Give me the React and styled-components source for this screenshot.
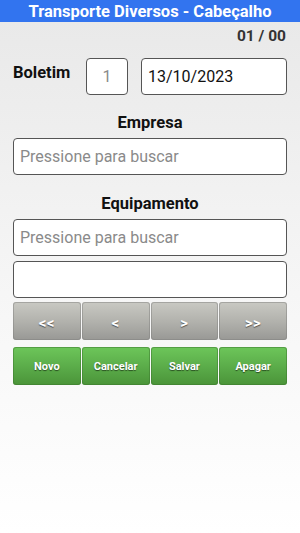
import React from "react";
import styled, { createGlobalStyle } from "styled-components";

const Global = createGlobalStyle`
  html, body { margin: 0; padding: 0; }
  body {
    font-family: Roboto, "Liberation Sans", Arial, sans-serif;
    background: #fff;
  }
`;

const Page = styled.div`
  width: 300px;
  min-height: 533px;
  box-sizing: border-box;
  background: linear-gradient(to bottom, #e8e8e8 0%, #f6f6f6 55%, #ffffff 100%);
  display: flex;
  flex-direction: column;
`;

const Header = styled.div`
  height: 22px;
  background: #3274ef;
  color: #fff;
  font-weight: bold;
  font-size: 16.5px;
  display: flex;
  align-items: center;
  justify-content: center;
`;

const Counter = styled.div`
  text-align: right;
  padding: 4px 14px 0 0;
  font-size: 15.5px;
  font-weight: bold;
  color: #333;
  height: 20px;
  line-height: 20px;
`;

const Content = styled.div`
  padding: 0 13px;
  display: flex;
  flex-direction: column;
`;

const BoletimRow = styled.div`
  display: flex;
  align-items: center;
  margin-top: 12px;
  height: 37px;
`;

const Label = styled.div`
  font-size: 16.5px;
  font-weight: bold;
  color: #111;
  width: 73px;
  margin-top: -8px;
`;

const Field = styled.div`
  box-sizing: border-box;
  height: 37px;
  width: ${(p) => (p.$w ? p.$w + "px" : "auto")};
  flex: ${(p) => (p.$grow ? 1 : "none")};
  margin-left: ${(p) => p.$ml || 0}px;
  margin-top: ${(p) => p.$mt || 0}px;
  background: #fff;
  border: 1px solid #555;
  border-radius: 4px;
  display: flex;
  align-items: center;
  justify-content: ${(p) => (p.$center ? "center" : "flex-start")};
  padding: ${(p) => (p.$center ? "0" : "0 6px")};
  font-size: 16px;
  color: ${(p) => (p.$muted ? "#8a8a8a" : "#111")};
`;

const SectionTitle = styled.div`
  text-align: center;
  font-size: 16.5px;
  font-weight: bold;
  color: #111;
  margin-top: ${(p) => p.$mt}px;
  height: 22px;
  line-height: 22px;
`;

const ButtonRow = styled.div`
  display: grid;
  grid-template-columns: repeat(4, 1fr);
  gap: 1px;
  margin-top: ${(p) => p.$mt}px;
`;

const Btn = styled.div`
  height: 38px;
  border-radius: 3px;
  display: flex;
  align-items: center;
  justify-content: center;
  color: #fff;
  font-weight: bold;
  font-size: ${(p) => (p.$green ? "11px" : "15px")};
  letter-spacing: ${(p) => (p.$green ? "0" : "0.5px")};
  text-shadow: 0 1px 1px rgba(0, 0, 0, 0.55);
  background: ${(p) =>
    p.$green
      ? "linear-gradient(to bottom, #6dc65a 0%, #58a847 60%, #4b9439 100%)"
      : "linear-gradient(to bottom, #c9c9c3 0%, #b0b0ab 55%, #989895 100%)"};
  box-shadow: inset 0 0 0 1px ${(p) => (p.$green ? "rgba(60,120,45,0.5)" : "rgba(130,130,128,0.5)")};
  padding-top: ${(p) => (p.$green ? 0 : 3)}px;
  box-sizing: border-box;
`;

export default function App() {
  return (
    <Page>
      <Global />
      <Header>Transporte Diversos - Cabeçalho</Header>
      <Counter>01 / 00</Counter>
      <Content>
        <BoletimRow>
          <Label>Boletim</Label>
          <Field $w={42} $center $muted>1</Field>
          <Field $grow $ml={13}>13/10/2023</Field>
        </BoletimRow>
        <SectionTitle $mt={17}>Empresa</SectionTitle>
        <Field $mt={4} $muted>Pressione para buscar</Field>
        <SectionTitle $mt={18}>Equipamento</SectionTitle>
        <Field $mt={4} $muted>Pressione para buscar</Field>
        <Field $mt={5}></Field>
        <ButtonRow $mt={4}>
          <Btn>&lt;&lt;</Btn>
          <Btn>&lt;</Btn>
          <Btn>&gt;</Btn>
          <Btn>&gt;&gt;</Btn>
        </ButtonRow>
        <ButtonRow $mt={7}>
          <Btn $green>Novo</Btn>
          <Btn $green>Cancelar</Btn>
          <Btn $green>Salvar</Btn>
          <Btn $green>Apagar</Btn>
        </ButtonRow>
      </Content>
    </Page>
  );
}
